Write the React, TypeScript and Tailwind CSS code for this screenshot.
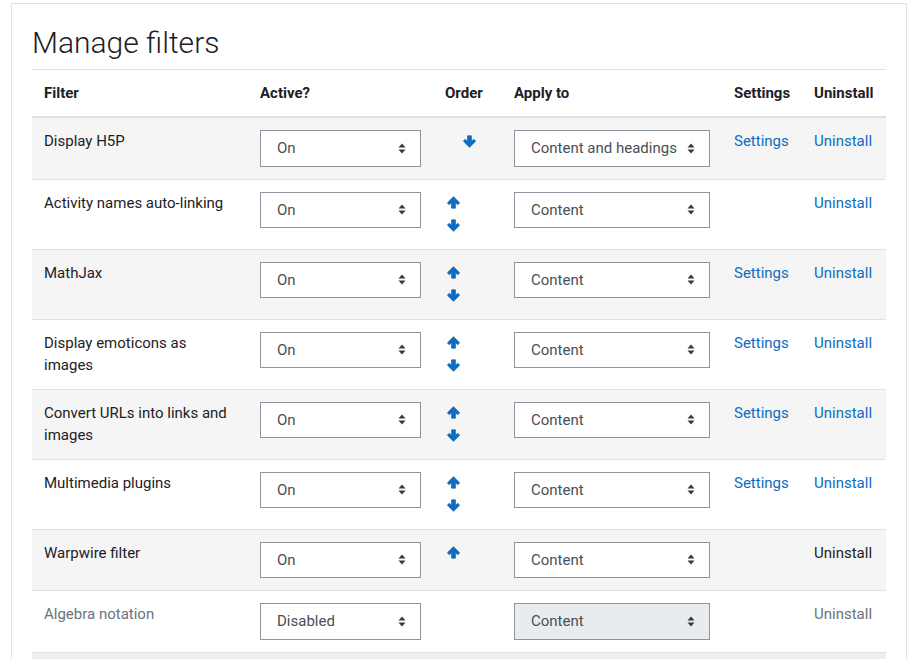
type Row = {
  name: string;
  active: string;
  up?: boolean;
  down?: boolean;
  applyTo: string;
  settings?: boolean;
  uninstallLink?: boolean;
  disabled?: boolean;
};

const ROWS: Row[] = [
  { name: "Display H5P", active: "On", down: true, applyTo: "Content and headings", settings: true, uninstallLink: true },
  { name: "Activity names auto-linking", active: "On", up: true, down: true, applyTo: "Content", uninstallLink: true },
  { name: "MathJax", active: "On", up: true, down: true, applyTo: "Content", settings: true, uninstallLink: true },
  { name: "Display emoticons as images", active: "On", up: true, down: true, applyTo: "Content", settings: true, uninstallLink: true },
  { name: "Convert URLs into links and images", active: "On", up: true, down: true, applyTo: "Content", settings: true, uninstallLink: true },
  { name: "Multimedia plugins", active: "On", up: true, down: true, applyTo: "Content", settings: true, uninstallLink: true },
  { name: "Warpwire filter", active: "On", up: true, applyTo: "Content" },
  { name: "Algebra notation", active: "Disabled", applyTo: "Content", disabled: true },
];

function Caret() {
  return (
    <svg width="8" height="11" viewBox="0 0 8 11" className="shrink-0">
      <path d="M4 0.5 L7.5 4.5 L0.5 4.5 Z" fill="#343a40" />
      <path d="M4 10.5 L7.5 6.5 L0.5 6.5 Z" fill="#343a40" />
    </svg>
  );
}

function FakeSelect({ value, width, disabled }: { value: string; width: string; disabled?: boolean }) {
  return (
    <div
      className={`${width} h-[36.5px] flex items-center justify-between border border-[#8f959e] pl-4 pr-[14px] text-[15px] text-[#495057] ${
        disabled ? "bg-[#e9ecef]" : "bg-white"
      }`}
    >
      <span className="truncate">{value}</span>
      <Caret />
    </div>
  );
}

function Arrow({ dir }: { dir: "up" | "down" }) {
  return (
    <span className="flex h-[22.5px] w-4 items-center justify-center">
      <svg
        width="13"
        height="13"
        viewBox="0 0 12 12"
        className={dir === "up" ? "rotate-180" : ""}
      >
        <path
          d="M4.3 0.8 H7.7 V6.1 L9.9 3.9 L11.6 5.7 L6 11.3 L0.4 5.7 L2.1 3.9 L4.3 6.1 Z"
          fill="#0f6cbf"
          stroke="#0f6cbf"
          strokeWidth="0.8"
          strokeLinejoin="round"
        />
      </svg>
    </span>
  );
}

export default function App() {
  return (
    <div className="min-h-screen bg-white pl-[11px] pt-[3px] font-['Roboto',sans-serif] text-[15px] leading-[1.5] text-[#1d2125]">
      <div className="w-[896px] border border-[#dee2e6] px-5 pt-[20.5px]">
        <h2 className="mb-2 text-[30px] font-light leading-[1.2] text-[#1d2125]">Manage filters</h2>

        <table className="w-full table-fixed border-collapse text-left">
          <colgroup>
            <col className="w-[216px]" />
            <col className="w-[185px]" />
            <col className="w-[69px]" />
            <col className="w-[220px]" />
            <col className="w-[80px]" />
            <col className="w-[84px]" />
          </colgroup>
          <thead>
            <tr>
              {["Filter", "Active?", "Order", "Apply to", "Settings", "Uninstall"].map((h) => (
                <th
                  key={h}
                  className="border-t border-b-2 border-[#dee2e6] p-3 align-bottom font-bold whitespace-nowrap"
                >
                  {h}
                </th>
              ))}
            </tr>
          </thead>
          <tbody>
            {ROWS.map((r, i) => (
              <tr key={r.name} className={i % 2 === 0 ? "bg-[#f5f5f5]" : "bg-white"}>
                <td className={`border-t border-[#dee2e6] p-3 align-top ${r.disabled ? "text-[#6a737b]" : ""}`}>
                  {r.name}
                </td>
                <td className="border-t border-[#dee2e6] p-3 align-top">
                  <FakeSelect value={r.active} width="w-[161px]" />
                </td>
                <td className="border-t border-[#dee2e6] p-3 align-top">
                  {r.up && r.down ? (
                    <div className="flex flex-col">
                      <Arrow dir="up" />
                      <Arrow dir="down" />
                    </div>
                  ) : r.up ? (
                    <Arrow dir="up" />
                  ) : r.down ? (
                    <div className="flex">
                      <span className="w-4" />
                      <Arrow dir="down" />
                    </div>
                  ) : null}
                </td>
                <td className="border-t border-[#dee2e6] p-3 align-top">
                  <FakeSelect value={r.applyTo} width="w-[196px]" disabled={r.disabled} />
                </td>
                <td className="border-t border-[#dee2e6] p-3 align-top">
                  {r.settings && <a className="text-[#0f6cbf]">Settings</a>}
                </td>
                <td className="border-t border-[#dee2e6] p-3 align-top">
                  {r.uninstallLink ? (
                    <a className="text-[#0f6cbf]">Uninstall</a>
                  ) : (
                    <span className={r.disabled ? "text-[#6a737b]" : ""}>Uninstall</span>
                  )}
                </td>
              </tr>
            ))}
            <tr className="bg-[#eeeeee]">
              <td colSpan={6} className="h-[62px] border-t border-[#dee2e6] p-3" />
            </tr>
          </tbody>
        </table>
      </div>
    </div>
  );
}
